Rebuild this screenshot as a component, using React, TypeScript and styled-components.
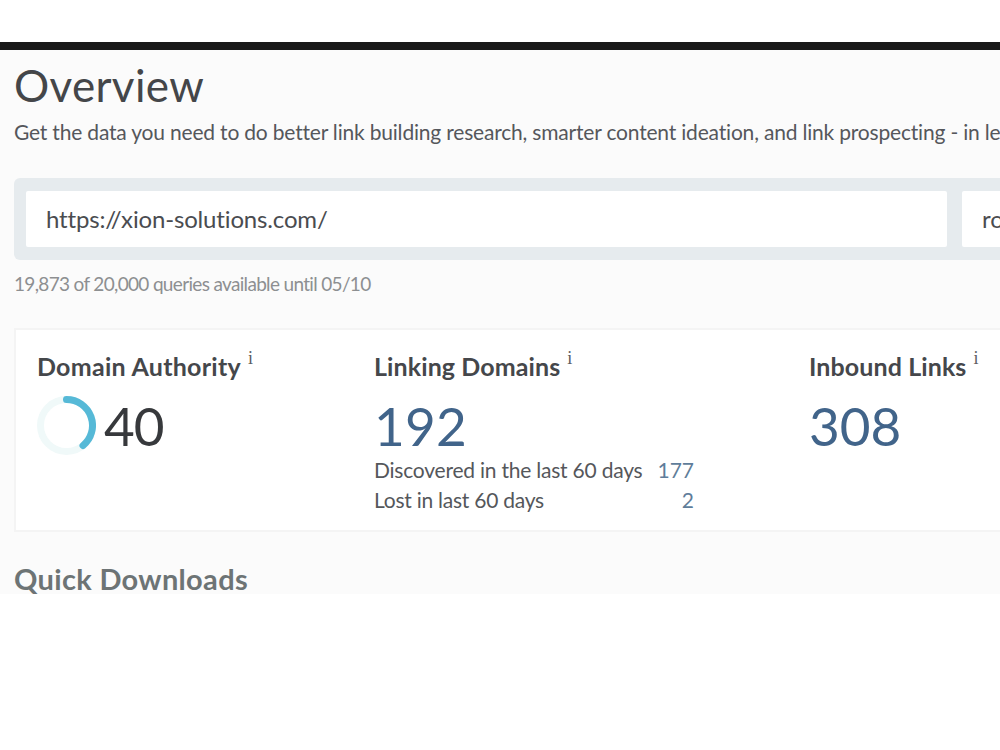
import React from "react";
import styled, { createGlobalStyle } from "styled-components";

const GlobalStyle = createGlobalStyle`
  * { box-sizing: border-box; }
  body {
    margin: 0;
    background: #fff;
    overflow: hidden;
    font-family: Lato, "Liberation Sans", sans-serif;
    font-variant-ligatures: none;
  }
`;

const Frame = styled.div`
  width: 1000px;
  height: 750px;
  padding-top: 42px;
  overflow: hidden;
  background: #fff;
`;

const Screen = styled.main`
  height: 552px;
  overflow: hidden;
  background: #fbfbfb;
`;

const TopBar = styled.div`
  height: 8px;
  background: #191919;
`;

const Content = styled.div`
  display: flex;
  flex-direction: column;
  padding-left: 14px;
`;

const Text = styled.div<{ $size: number; $line: number; $color?: string; $weight?: number; $spacing?: number }>`
  font-size: ${(p) => p.$size}px;
  line-height: ${(p) => p.$line}px;
  color: ${(p) => p.$color ?? "#4a4c50"};
  font-weight: ${(p) => p.$weight ?? 400};
  letter-spacing: ${(p) => p.$spacing ?? 0}px;
  white-space: nowrap;
`;

const Title = styled(Text).attrs({ as: "h1" })`
  margin: 10px 0 0;
`;

const Intro = styled(Text)`
  margin-top: 9px;
`;

const SearchPanel = styled.div`
  display: flex;
  gap: 15px;
  width: 1200px;
  height: 82px;
  margin-top: 33px;
  padding: 13px 12px;
  border-radius: 6px 0 0 6px;
  background: #e6ebee;
`;

const Field = styled.div<{ $width: number }>`
  width: ${(p) => p.$width}px;
  height: 56px;
  padding: 0 20px;
  border-radius: 2px;
  background: #fff;
`;

const Quota = styled(Text)`
  margin-top: 12px;
`;

const Metrics = styled.section`
  display: grid;
  grid-template-columns: 337px 435px 300px;
  width: 1200px;
  height: 204px;
  margin-top: 32px;
  padding: 22px 0 0 21px;
  border: 2px solid #f4f4f4;
  background: #fff;
`;

const Heading = styled.div`
  display: flex;
  gap: 7px;
  height: 28px;
`;

const Info = styled.span`
  margin-top: -4px;
  color: #5c5e62;
  font: 400 18px/20px "Liberation Serif", serif;
`;

const Score = styled.div`
  display: flex;
  height: 59px;
  margin-top: 16px;
  gap: 8px;
`;

const Ring = styled.svg`
  width: 59px;
  height: 59px;
`;

const Detail = styled.div`
  display: flex;
  justify-content: space-between;
  width: 320px;
`;

const Downloads = styled(Text).attrs({ as: "h2" })`
  margin: 28px 0 0;
`;

const Metric = ({ label, spacing, children }: { label: string; spacing: number; children: React.ReactNode }) => (
  <div>
    <Heading>
      <Text $size={25} $line={28} $weight={700} $spacing={spacing} $color="#45474b">{label}</Text>
      <Info>i</Info>
    </Heading>
    <Score>{children}</Score>
  </div>
);

export default function App() {
  return (
    <Frame>
      <GlobalStyle />
      <Screen>
        <TopBar />
        <Content>
          <Title $size={44} $line={50} $spacing={0.35} $color="#444649">Overview</Title>
          <Intro $size={21} $line={26} $spacing={-0.19} $color="#55575b">
            Get the data you need to do better link building research, smarter content ideation, and link prospecting - in less time.
          </Intro>
          <SearchPanel>
            <Field $width={921}>
              <Text $size={24} $line={56} $spacing={-0.16}>https://xion-solutions.com/</Text>
            </Field>
            <Field $width={240}>
              <Text $size={24} $line={56}>root domain</Text>
            </Field>
          </SearchPanel>
          <Quota $size={19} $line={24} $spacing={-0.67} $color="#8d8f91">19,873 of 20,000 queries available until 05/10</Quota>
          <Metrics>
            <Metric label="Domain Authority" spacing={0.27}>
              <Ring viewBox="0 0 59 59" fill="none" strokeWidth="7">
                <circle cx="29.5" cy="29.5" r="26" stroke="#f0f9f9" />
                <path d="M29.5 3.5A26 26 0 0 1 46 49.6" stroke="#56b9d7" strokeLinecap="round" />
              </Ring>
              <Text $size={53} $line={60} $spacing={-1} $color="#37393c">40</Text>
            </Metric>
            <div>
              <Metric label="Linking Domains" spacing={0.1}>
                <Text $size={53} $line={60} $spacing={0.2} $color="#41648a">192</Text>
              </Metric>
              <Detail>
                <Text $size={21} $line={30} $spacing={-0.22} $color="#55575b">Discovered in the last 60 days</Text>
                <Text $size={21} $line={30} $color="#5f7d9a">177</Text>
              </Detail>
              <Detail>
                <Text $size={21} $line={30} $spacing={-0.25} $color="#55575b">Lost in last 60 days</Text>
                <Text $size={21} $line={30} $color="#5f7d9a">2</Text>
              </Detail>
            </div>
            <Metric label="Inbound Links" spacing={0.1}>
              <Text $size={53} $line={60} $color="#41648a">308</Text>
            </Metric>
          </Metrics>
          <Downloads $size={29} $line={38} $weight={700} $spacing={0.32} $color="#6d7475">Quick Downloads</Downloads>
        </Content>
      </Screen>
    </Frame>
  );
}
